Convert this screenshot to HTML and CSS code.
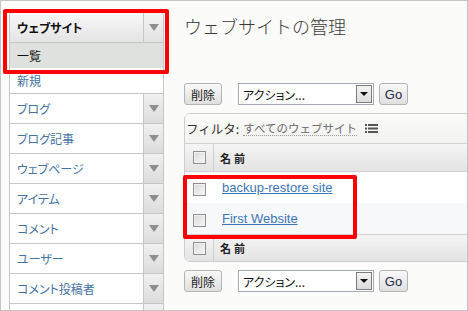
FILE: index.html
```html
<!DOCTYPE html>
<html lang="ja">
<head>
<meta charset="utf-8">
<link rel="stylesheet" href="styles.css">
</head>
<body>
<div class="frame">
  <aside class="sidebar">
    <nav class="menu">
      <div class="item head"><span class="label">ウェブサイト</span><span class="arrow"><i class="tri"></i></span></div>
      <div class="sub current"><span class="label">一覧</span></div>
      <div class="sub plain"><span class="label link">新規</span></div>
      <div class="item"><span class="label link">ブログ</span><span class="arrow"><i class="tri"></i></span></div>
      <div class="item"><span class="label link">ブログ記事</span><span class="arrow"><i class="tri"></i></span></div>
      <div class="item"><span class="label link">ウェブページ</span><span class="arrow"><i class="tri"></i></span></div>
      <div class="item"><span class="label link">アイテム</span><span class="arrow"><i class="tri"></i></span></div>
      <div class="item"><span class="label link">コメント</span><span class="arrow"><i class="tri"></i></span></div>
      <div class="item"><span class="label link">ユーザー</span><span class="arrow"><i class="tri"></i></span></div>
      <div class="item"><span class="label link">コメント投稿者</span><span class="arrow"><i class="tri"></i></span></div>
      <div class="item"><span class="label link"></span><span class="arrow"></span></div>
    </nav>
  </aside>
  <main class="main">
    <h1 class="title">ウェブサイトの管理</h1>
    <div class="actions">
      <button class="btn">削除</button>
      <div class="select"><span class="select-text">アクション...</span><span class="select-btn"><i class="tri-dark"></i></span></div>
      <button class="btn go">Go</button>
    </div>
    <div class="panel">
      <div class="filter">
        <span class="filter-label">フィルタ:</span>
        <span class="filter-value">すべてのウェブサイト</span>
        <svg class="list-icon" width="13" height="9" viewBox="0 0 13 9">
          <rect x="0" y="0" width="2" height="2" fill="#555"/><rect x="3" y="0" width="10" height="2" fill="#555"/>
          <rect x="0" y="3.5" width="2" height="2" fill="#555"/><rect x="3" y="3.5" width="10" height="2" fill="#555"/>
          <rect x="0" y="7" width="2" height="2" fill="#555"/><rect x="3" y="7" width="10" height="2" fill="#555"/>
        </svg>
      </div>
      <div class="row header"><span class="cbcell"><span class="cb"></span></span><span class="col-name">名前</span></div>
      <div class="row data"><span class="cbcell"><span class="cb"></span></span><a class="site" href="#">backup-restore site</a></div>
      <div class="row data alt"><span class="cbcell"><span class="cb"></span></span><a class="site" href="#">First Website</a></div>
      <div class="row header footer"><span class="cbcell"><span class="cb"></span></span><span class="col-name">名前</span></div>
    </div>
    <div class="actions bottom">
      <button class="btn">削除</button>
      <div class="select"><span class="select-text">アクション...</span><span class="select-btn"><i class="tri-dark"></i></span></div>
      <button class="btn go">Go</button>
    </div>
  </main>
  <div class="mark mark-side"></div>
  <div class="mark mark-rows"></div>
</div>
</body>
</html>
```

FILE: styles.css
```css
body {
  margin: 0;
}

.frame {
  width: 468px;
  height: 311px;
  box-sizing: border-box;
  border: 1px solid #c4c4c4;
  background: #fbfbf9;
  display: flex;
  position: relative;
  overflow: hidden;
  font-family: "Noto Sans CJK JP", sans-serif;
  color: #222;
}

/* Sidebar */
.sidebar {
  width: 174px;
  flex: none;
  box-sizing: border-box;
  padding: 11px 0 0 8px;
}

.menu {
  width: 155px;
  box-sizing: border-box;
  border: 1px solid #c6c6c6;
  border-bottom: none;
  border-radius: 4px 4px 0 0;
  overflow: hidden;
  background: #fff;
}

.item {
  display: flex;
  height: 29px;
  border-top: 1px solid #c6c6c6;
  background: #fff;
}

.item.head {
  border-top: none;
  background: linear-gradient(#f8f8f8, #e4e4e4);
}

.label {
  flex: 1;
  display: flex;
  align-items: center;
  padding-left: 7px;
  font-size: 12px;
  font-feature-settings: "palt";
  white-space: nowrap;
}

.head .label {
  font-weight: bold;
  color: #111;
}

.link {
  color: #44739f;
}

.arrow {
  width: 19px;
  flex: none;
  border-left: 1px solid #c6c6c6;
  background: linear-gradient(#f0f0f0, #dcdcdc);
  display: flex;
  align-items: center;
  justify-content: center;
}

.head .arrow {
  background: linear-gradient(#f3f3f3, #e2e2e2);
}

.tri {
  width: 0;
  height: 0;
  border-left: 5px solid transparent;
  border-right: 5px solid transparent;
  border-top: 7px solid #8e8e8e;
}

.sub {
  display: flex;
  height: 25px;
}

.sub.current {
  border-top: 1px solid #c6c6c6;
  background: #dfe1df;
  color: #111;
}

.sub.plain {
  background: #fff;
}

/* Main */
.main {
  flex: 1;
  min-width: 0;
  box-sizing: border-box;
  padding: 13px 0 0 9px;
}

.title {
  margin: 0;
  font-size: 18px;
  font-weight: 300;
  line-height: 24px;
  color: #3a3a3a;
  white-space: nowrap;
}

.actions {
  display: flex;
  height: 22px;
  margin-top: 45px;
}

.actions.bottom {
  margin-top: 8px;
}

.btn {
  width: 38px;
  height: 22px;
  padding: 0;
  box-sizing: border-box;
  border: 1px solid #b4b4b4;
  border-radius: 3px;
  background: linear-gradient(#f9f9f9, #dfdfdf);
  font-family: "Noto Sans CJK JP", sans-serif;
  font-size: 12px;
  color: #222;
}

.btn.go {
  width: 29px;
  font-family: "Liberation Sans", sans-serif;
  font-size: 13px;
  color: #1f2a44;
}

.select {
  width: 136px;
  height: 22px;
  box-sizing: border-box;
  margin: 0 5px 0 16px;
  border: 1px solid #a6abb2;
  background: #fff;
  display: flex;
  align-items: center;
}

.select-text {
  flex: 1;
  padding-left: 4px;
  font-size: 12px;
  font-feature-settings: "palt";
  color: #111;
  white-space: nowrap;
}

.select-btn {
  width: 16px;
  height: 18px;
  box-sizing: border-box;
  margin-right: 1px;
  border: 1px solid #7b7b7b;
  background: linear-gradient(#f4f4f4, #dcdcdc);
  display: flex;
  align-items: center;
  justify-content: center;
}

.tri-dark {
  width: 0;
  height: 0;
  border-left: 4px solid transparent;
  border-right: 4px solid transparent;
  border-top: 4px solid #111;
}

/* Panel */
.panel {
  margin-top: 8px;
  margin-right: -1px;
  border: 1px solid #cdcdcd;
  border-radius: 6px 0 0 6px;
  overflow: hidden;
  background: #fff;
}

.filter {
  height: 29px;
  display: flex;
  align-items: center;
  padding-left: 1px;
  background: linear-gradient(#fafaf8, #f2f2f0);
  border-bottom: 1px solid #d2d2d2;
  font-size: 12.5px;
  white-space: nowrap;
}

.filter-label {
  color: #333;
}

.filter-value {
  margin-left: 4px;
  color: #6a6a6a;
  font-size: 11.5px;
  border-bottom: 1px dotted #9a9a9a;
  line-height: 14px;
}

.list-icon {
  margin-left: 8px;
}

.row {
  display: flex;
  align-items: center;
}

.row.header {
  height: 27px;
  background: linear-gradient(#f5f5f5, #e3e3e3);
  border-bottom: 1px solid #cfcfcf;
}

.row.footer {
  height: 26px;
  border-top: 1px solid #cfcfcf;
  border-bottom: none;
}

.cbcell {
  width: 28px;
  align-self: stretch;
  display: flex;
  align-items: center;
  justify-content: center;
  flex: none;
}

.header .cbcell {
  border-right: 1px solid #cfcfcf;
}

.data .cbcell {
  width: 29px;
}

.cb {
  width: 13px;
  height: 13px;
  box-sizing: border-box;
  border: 1px solid #8e8f8f;
  background: linear-gradient(135deg, #d8d8d8, #f8f8f8);
  box-shadow: inset 0 0 0 1px #f2f2f2;
}

.data .cb {
  margin-top: 4px;
}

.col-name {
  padding-left: 6px;
  font-size: 11px;
  font-weight: bold;
  letter-spacing: 3px;
  color: #222;
}

.row.data {
  height: 31px;
  background: #fff;
}

.row.data.alt {
  background: #f7f8fa;
}

.site {
  margin-left: 8px;
  font-family: "Liberation Sans", sans-serif;
  font-size: 13px;
  color: #3d77b8;
  text-decoration: underline;
  white-space: nowrap;
}

/* Red annotation boxes */
.mark {
  position: absolute;
  box-sizing: border-box;
  border: 4px solid #ff0000;
  border-radius: 2px;
}

.mark-side {
  left: 2px;
  top: 8px;
  width: 166px;
  height: 65px;
}

.mark-rows {
  left: 182px;
  top: 174px;
  width: 174px;
  height: 64px;
}
```
